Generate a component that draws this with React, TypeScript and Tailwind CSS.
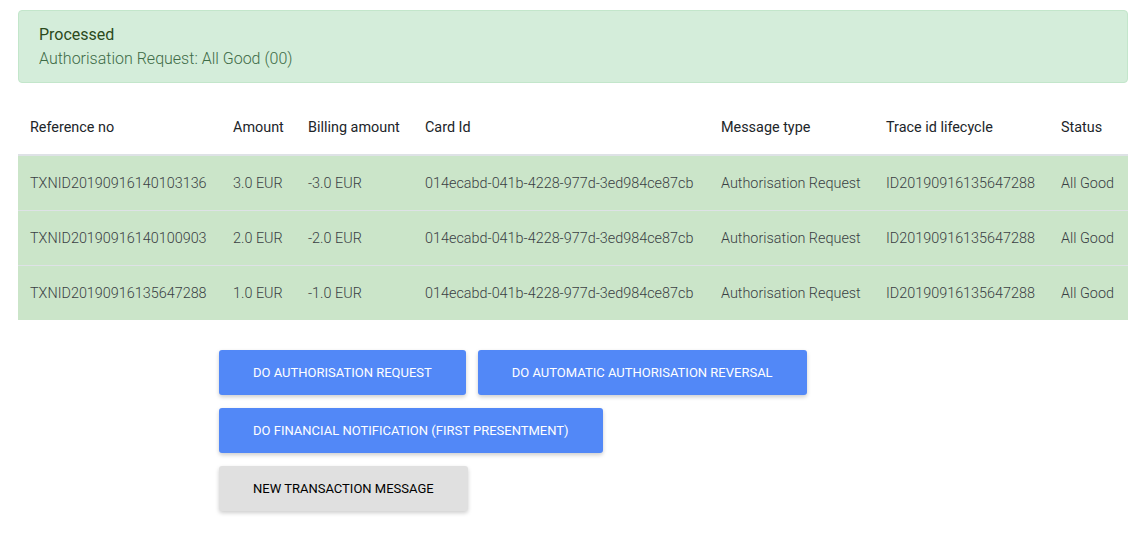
import React from 'react';

interface Txn {
  ref: string;
  amount: string;
  billing: string;
  cardId: string;
  messageType: string;
  traceId: string;
  status: string;
}

const txns: Txn[] = [
  {
    ref: 'TXNID20190916140103136',
    amount: '3.0 EUR',
    billing: '-3.0 EUR',
    cardId: '014ecabd-041b-4228-977d-3ed984ce87cb',
    messageType: 'Authorisation Request',
    traceId: 'ID20190916135647288',
    status: 'All Good',
  },
  {
    ref: 'TXNID20190916140100903',
    amount: '2.0 EUR',
    billing: '-2.0 EUR',
    cardId: '014ecabd-041b-4228-977d-3ed984ce87cb',
    messageType: 'Authorisation Request',
    traceId: 'ID20190916135647288',
    status: 'All Good',
  },
  {
    ref: 'TXNID20190916135647288',
    amount: '1.0 EUR',
    billing: '-1.0 EUR',
    cardId: '014ecabd-041b-4228-977d-3ed984ce87cb',
    messageType: 'Authorisation Request',
    traceId: 'ID20190916135647288',
    status: 'All Good',
  },
];

const headers = ['Reference no', 'Amount', 'Billing amount', 'Card Id', 'Message type', 'Trace id lifecycle', 'Status'];
const colWidths = ['w-[203px]', 'w-[75px]', 'w-[117px]', 'w-[296px]', 'w-[165px]', 'w-[175px]', 'w-[79px]'];

const Button: React.FC<{ label: string; primary?: boolean }> = ({ label, primary = true }) => (
  <button
    className={
      primary
        ? 'h-[45px] px-[34px] rounded-[3px] bg-[#5288f7] text-white text-[13px] font-normal shadow-[0_2px_4px_rgba(0,0,0,0.2)]'
        : 'h-[45px] px-[34px] rounded-[3px] bg-[#e0e0e0] text-black text-[13px] font-normal shadow-[0_2px_4px_rgba(0,0,0,0.2)]'
    }
  >
    {label}
  </button>
);

export default function App() {
  return (
    <div className="min-h-screen bg-white px-[18px] pt-[10px] font-['Roboto',sans-serif]">
      {/* Status alert */}
      <div className="rounded-[4px] border border-[#c3e6cb] bg-[#d4edda] px-5 pt-[12px] pb-[11px]">
        <p className="text-[16px] leading-6 text-[#2b4a1c]">Processed</p>
        <p className="text-[16px] leading-6 font-light text-[#3d6b46]">Authorisation Request: All Good (00)</p>
      </div>

      {/* Transactions */}
      <table className="mt-[18px] w-full table-fixed border-collapse text-left text-[14.4px]">
        <thead>
          <tr className="border-b-2 border-[#dee2e6]">
            {headers.map((h, i) => (
              <th key={h} className={`${colWidths[i]} h-[54px] px-3 font-normal text-[#212529] whitespace-nowrap`}>
                {h}
              </th>
            ))}
          </tr>
        </thead>
        <tbody>
          {txns.map((t, i) => (
            <tr key={t.ref} className={`bg-[#cbe5c9] ${i > 0 ? 'border-t border-[#dee2e6]' : ''} font-light text-[#3a3f44]`}>
              <td className="h-[55px] px-3 pt-[2px] whitespace-nowrap">{t.ref}</td>
              <td className="px-3 pt-[2px] whitespace-nowrap">{t.amount}</td>
              <td className="px-3 pt-[2px] whitespace-nowrap">{t.billing}</td>
              <td className="px-3 pt-[2px] whitespace-nowrap">{t.cardId}</td>
              <td className="px-3 pt-[2px] whitespace-nowrap">{t.messageType}</td>
              <td className="px-3 pt-[2px] whitespace-nowrap">{t.traceId}</td>
              <td className="px-3 pt-[2px] whitespace-nowrap">{t.status}</td>
            </tr>
          ))}
        </tbody>
      </table>

      {/* Actions */}
      <div className="ml-[201px] mt-[30px] flex flex-col items-start gap-[13px]">
        <div className="flex gap-3">
          <Button label="DO AUTHORISATION REQUEST" />
          <Button label="DO AUTOMATIC AUTHORISATION REVERSAL" />
        </div>
        <Button label="DO FINANCIAL NOTIFICATION (FIRST PRESENTMENT)" />
        <Button label="NEW TRANSACTION MESSAGE" primary={false} />
      </div>
    </div>
  );
}
